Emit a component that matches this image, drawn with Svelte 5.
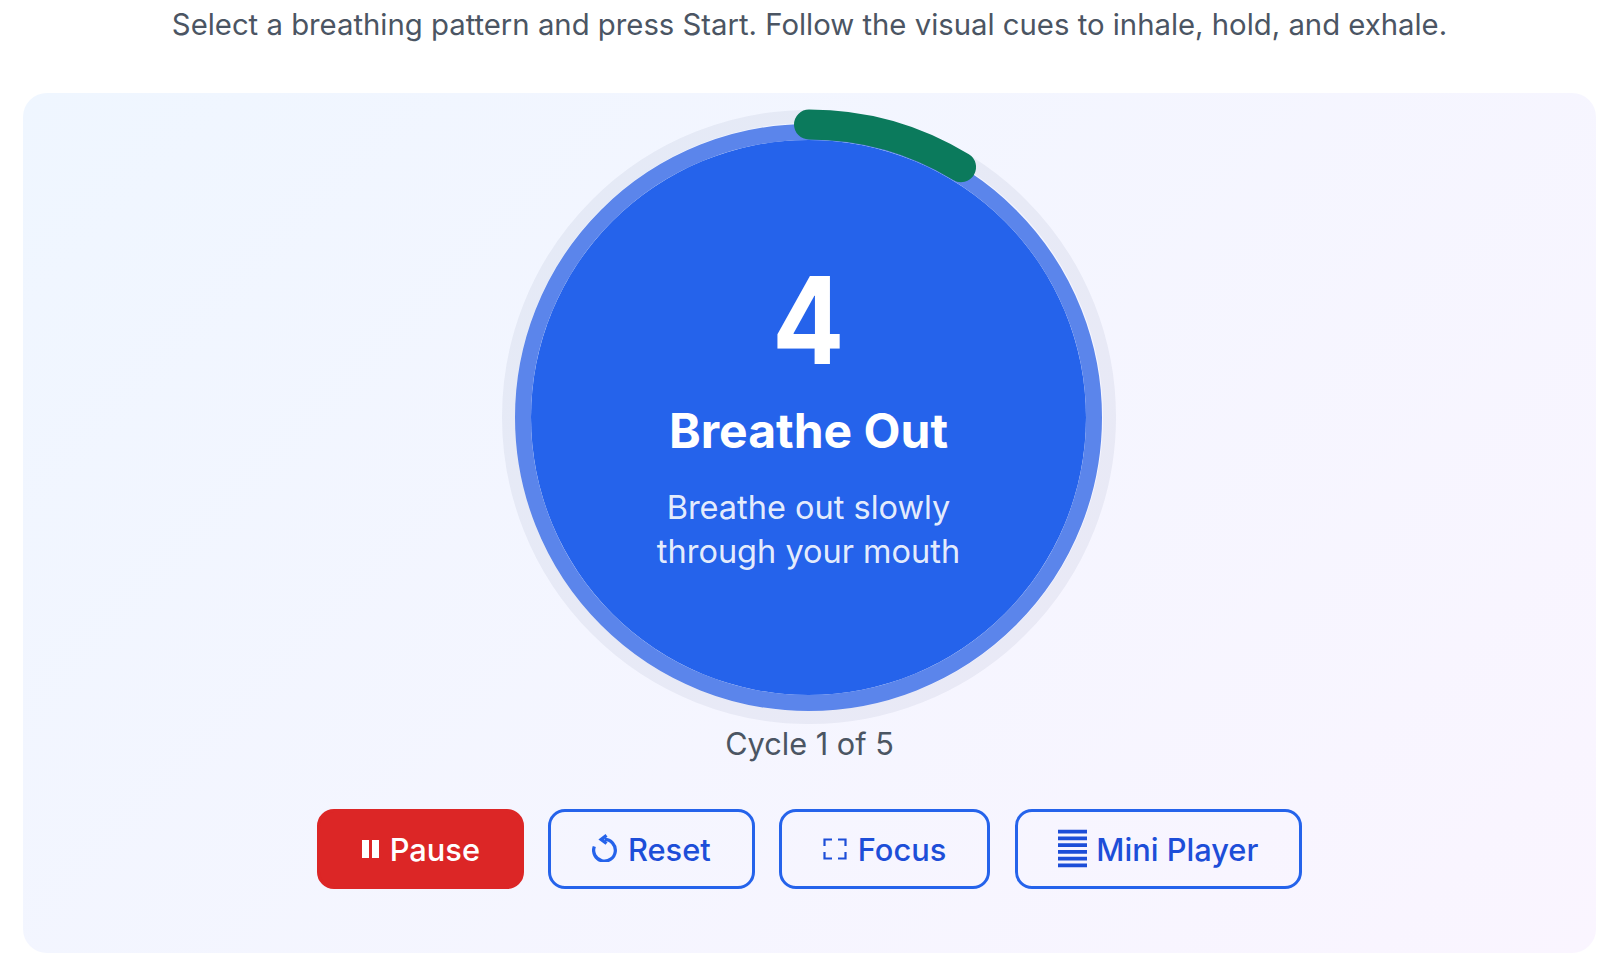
<script>
  let seconds = $state(4);
  let phase = $state('Breathe Out');
  let hint = $state('Breathe out slowly through your mouth');
  let cycle = $state(1);
  const totalCycles = 5;

  // ring geometry, the svg box is 616 wide
  const barRadius = 292.5;
  const progress = 0.087;
  const circumference = 2 * Math.PI * barRadius;
</script>

<div class="page">
  <p class="intro">Select a breathing pattern and press Start. Follow the visual cues to inhale, hold, and exhale.</p>

  <section class="card">
    <div class="stage">
      <div class="orb">
        <span class="count">{seconds}</span>
        <span class="phase">{phase}</span>
        <span class="hint">{hint}</span>
      </div>
      <svg class="ring" viewBox="0 0 616 616" aria-hidden="true">
        <circle class="ring-track" cx="308" cy="308" r="300.5" />
        <circle
          class="ring-bar"
          cx="308"
          cy="308"
          r={barRadius}
          stroke-dasharray="{circumference * progress} {circumference}"
          transform="rotate(-90 308 308)"
        />
      </svg>
    </div>

    <div class="cycle">Cycle {cycle} of {totalCycles}</div>

    <div class="controls">
      <button class="btn danger">
        <svg class="icon pause" viewBox="0 0 20 18"><rect x="1" y="0" width="7" height="18" /><rect x="11" y="0" width="7" height="18" /></svg>
        Pause
      </button>
      <button class="btn">
        <svg class="icon line reset" viewBox="2.800 2 18.400 21"><path d="M12 6a8 8 0 1 1-7.500 5.200" /><path d="M13.500 3 9.500 6l4 3" /></svg>
        Reset
      </button>
      <button class="btn">
        <svg class="icon line focus" viewBox="0 0 24 22"><path d="M9 1.500H1.500V8M15 1.500h7.500V8M9 20.500H1.500V14M15 20.500h7.500V14" /></svg>
        Focus
      </button>
      <button class="btn">
        <svg class="icon bars" viewBox="0 0 30 40"><path d="M0 2h30M0 9h30M0 16h30M0 23h30M0 30h30M0 37h30" /></svg>
        Mini Player
      </button>
    </div>
  </section>
</div>

<style>
  :global(body) {
    background: #fff;
    font-family: Inter, "Liberation Sans", sans-serif;
  }
  .page {
    width: 1622px;
    height: 976px;
    padding: 0 26px 23px 23px;
    box-sizing: border-box;
    display: flex;
    flex-direction: column;
    overflow: hidden;
  }
  .intro {
    margin: 9px 0 0;
    height: 84px;
    text-align: center;
    font-size: 29.3px;
    line-height: 32px;
    color: #4b5563;
  }
  .card {
    height: 860px;
    border-radius: 24px;
    background: linear-gradient(135deg, #eff6ff 0%, #faf5ff 100%);
    display: flex;
    flex-direction: column;
    align-items: center;
    padding-top: 16px;
    box-sizing: border-box;
  }
  .stage {
    position: relative;
    width: 616px;
    height: 616px;
    margin-right: 2px;
    display: flex;
    align-items: center;
    justify-content: center;
  }
  .orb {
    width: 587px;
    height: 587px;
    border-radius: 50%;
    border: 16px solid #5b85eb;
    background: #2563eb;
    background-clip: padding-box;
    box-sizing: border-box;
    color: #fff;
    display: flex;
    flex-direction: column;
    align-items: center;
    text-align: center;
    padding-top: 122.5px;
  }
  .count {
    font-size: 116px;
    line-height: 112px;
    font-weight: 700;
    /* the digit in the design is narrower and taller than Inter's */
    transform: scale(0.92, 1.04);
    transform-origin: top center;
  }
  .phase {
    margin-top: 29px;
    font-size: 48px;
    line-height: 56px;
    font-weight: 700;
  }
  .hint {
    margin-top: 27px;
    width: 340px;
    font-size: 32.5px;
    line-height: 44px;
    color: rgba(255, 255, 255, 0.9);
  }
  .ring {
    position: absolute;
    inset: 0;
    overflow: visible;
  }
  .ring circle {
    fill: none;
  }
  .ring-track {
    stroke: rgba(30, 58, 110, 0.06);
    stroke-width: 13;
  }
  .ring-bar {
    stroke: #0b7a5c;
    stroke-width: 30;
    stroke-linecap: round;
  }
  .cycle {
    margin-top: 3px;
    font-size: 30.7px;
    line-height: 32px;
    color: #4b5563;
  }
  .controls {
    margin-top: 49px;
    display: flex;
    gap: 24.5px;
  }
  .btn {
    height: 80px;
    padding: 0 40.75px;
    border-radius: 17px;
    border: 3px solid #2563eb;
    background: transparent;
    color: #1d4ed8;
    font: 500 30.8px Inter, "Liberation Sans", sans-serif;
    display: flex;
    align-items: center;
    gap: 9px;
  }
  .danger {
    background: #dc2626;
    border-color: #dc2626;
    color: #fff;
  }
  .icon {
    fill: currentColor;
    flex: none;
  }
  .pause {
    width: 20px;
    height: 18px;
  }
  .line {
    fill: none;
    stroke: currentColor;
    stroke-width: 2.4;
    margin-right: 2px;
  }
  .reset {
    width: 25px;
    height: 28.500px;
    margin-top: -2px;
    color: #2563eb;
  }
  .focus {
    width: 24px;
    height: 22px;
    stroke-width: 2.2;
  }
  .bars {
    width: 29px;
    height: 40px;
    fill: none;
    stroke: currentColor;
    stroke-width: 4;
  }
</style>
